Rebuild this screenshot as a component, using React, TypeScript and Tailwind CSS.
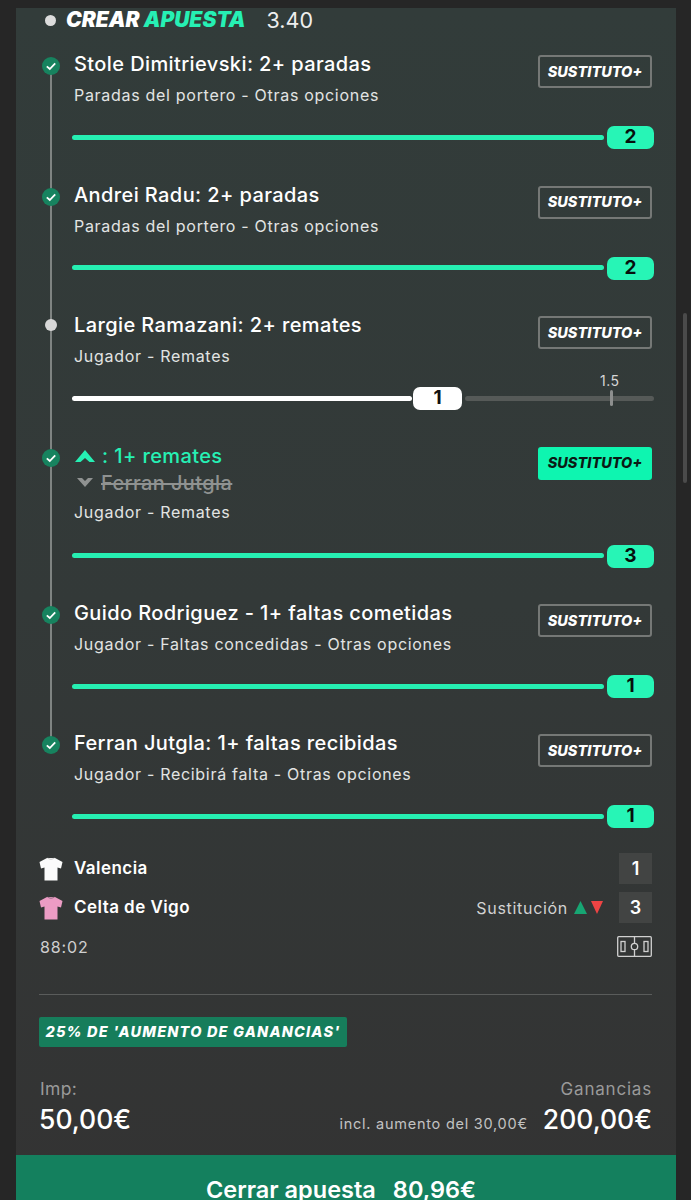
import React from "react";

function Sub({ active }: { active?: boolean }) {
  return (
    <div
      className={`flex h-[33px] w-[114px] shrink-0 items-center justify-center rounded-[3px] text-[14.5px] font-extrabold italic tracking-[0px] ${
        active ? "bg-[#0ef5b0] text-[#0b1a15]" : "border-2 border-[#757876] text-white"
      }`}
    >
      SUSTITUTO+
    </div>
  );
}

function Check() {
  return (
    <svg width="18" height="18" viewBox="0 0 18 18" className="relative z-10 mt-[2px]">
      <circle cx="9" cy="9" r="9" fill="#17835f" />
      <path d="M4.8 9.3 L7.8 12 L13.2 6.4" fill="none" stroke="#fff" strokeWidth="1.8" />
    </svg>
  );
}

function FullSlider({ value }: { value: string }) {
  return (
    <div className="flex h-6 items-center pl-[56px] pr-[22px]">
      <div className="h-[5px] flex-1 rounded-full bg-[#26efb2]" />
      <div className="ml-[3px] mt-px flex h-[23px] w-[47px] items-center justify-center rounded-[7px] bg-[#27f5b6] text-[19px] font-bold text-[#06100d]">
        {value}
      </div>
    </div>
  );
}

function PartialSlider() {
  return (
    <div className="relative flex h-6 items-center pl-[56px] pr-[22px]">
      <div className="h-[5px] w-[340px] rounded-full bg-white" />
      <div className="ml-px mt-px flex h-[23px] w-[49px] items-center justify-center rounded-[7px] bg-white text-[19px] font-bold text-[#111]">
        1
      </div>
      <div className="ml-[3px] h-[5px] flex-1 rounded-full bg-[#565a58]" />
      <div className="absolute left-[594px] top-[4px] h-[16px] w-[3px] rounded-sm bg-[#8d8f8e]" />
      <div className="absolute left-[584px] top-[-16px] text-[14px] tracking-[0.5px] text-[#d6d6d6]">1.5</div>
    </div>
  );
}

function Row({
  title,
  sub,
  checked = true,
  children,
}: {
  title?: string;
  sub: string;
  checked?: boolean;
  children?: React.ReactNode;
}) {
  return (
    <div className="flex pl-[26px] pr-[24px]">
      <div className="flex w-[32px] shrink-0 justify-start pt-[3px]">
        {checked ? (
          <Check />
        ) : (
          <div className="relative z-10 ml-[3px] mt-[3px] h-3 w-3 rounded-full bg-[#d8d8d8]" />
        )}
      </div>
      <div className="min-w-0 flex-1">
        {children ?? (
          <div className="h-[24px] text-[20px] font-medium leading-[24px] tracking-[0.4px] text-white">{title}</div>
        )}
        <div className="mt-[8px] h-[22px] text-[16px] leading-[22px] tracking-[0.7px] text-[#e2e4e3]">{sub}</div>
      </div>
      <div className="pt-[3px]">{children ? <Sub active /> : <Sub />}</div>
    </div>
  );
}

function Shirt({ color, shade }: { color: string; shade: string }) {
  return (
    <svg width="24" height="24" viewBox="0 0 24 24">
      <path
        d="M8 1 L16 1 L23.5 5 L22 11.5 L18.5 10.5 L18.5 23.5 L5.5 23.5 L5.5 10.5 L2 11.5 L0.5 5 Z"
        fill={color}
      />
      <path d="M8 1 Q12 4.5 16 1 L15 0.8 Q12 2.5 9 0.8 Z" fill={shade} />
    </svg>
  );
}

export default function App() {
  return (
    <div
      style={{ fontFamily: "Inter, sans-serif" }}
      className="relative h-[1200px] w-[691px] overflow-hidden bg-[#262626]"
    >
      <div className="absolute right-[4px] top-[313px] h-[170px] w-[4px] rounded-full bg-[#4b4b4b]" />
      <div className="ml-4 mt-2 flex h-[1192px] w-[660px] flex-col overflow-hidden bg-gradient-to-b from-[#323c3a] via-[#333938] to-[#333333]">
        <div className="flex h-[24px] shrink-0 items-center pl-[29px]">
          <div className="h-[11px] w-[11px] rounded-full bg-[#dcdcdc]" />
          <div className="ml-[10px] text-[21px] font-black italic leading-[24px] tracking-[0px] text-white">
            CREAR <span className="text-[#26f0b4]">APUESTA</span>
          </div>
          <div className="ml-[21px] text-[21.5px] leading-[24px] text-[#eeeeee]">3.40</div>
        </div>

        <div className="relative mt-[20px] shrink-0">
          <div className="absolute left-[34px] top-[8px] h-[685px] w-[2px] bg-[#7f8482]" />
          <div className="h-[130.5px]">
            <Row title="Stole Dimitrievski: 2+ paradas" sub="Paradas del portero - Otras opciones" />
            <div className="mt-[19px]"><FullSlider value="2" /></div>
          </div>
          <div className="h-[130.5px]">
            <Row title="Andrei Radu: 2+ paradas" sub="Paradas del portero - Otras opciones" />
            <div className="mt-[19px]"><FullSlider value="2" /></div>
          </div>
          <div className="h-[130.5px]">
            <Row checked={false} title="Largie Ramazani: 2+ remates" sub="Jugador - Remates" />
            <div className="mt-[19px]"><PartialSlider /></div>
          </div>
          <div className="h-[157.5px]">
            <Row sub="Jugador - Remates">
              <div className="flex h-[24px] items-center text-[20px] font-medium leading-[24px] tracking-[0.4px] text-[#26f0b4]">
                <svg width="20" height="12" viewBox="0 0 20 12" className="ml-px mr-[7px]">
                  <path d="M10 0 L20 12 L14.5 12 L10 8 L5.5 12 L0 12 Z" fill="#26f0b4" />
                </svg>
                : 1+ remates
              </div>
              <div className="mb-[-2px] mt-[3px] flex h-[24px] items-center text-[20px] font-medium leading-[24px] tracking-[0.4px] text-[#8f9291]">
                <svg width="16" height="9" viewBox="0 0 16 9" className="ml-[3px] mr-[8px]">
                  <path d="M0 0 L5 0 L8 3 L11 0 L16 0 L8 9 Z" fill="#8f9291" />
                </svg>
                <span className="line-through">Ferran Jutgla</span>
              </div>
            </Row>
            <div className="mt-[21px]"><FullSlider value="3" /></div>
          </div>
          <div className="h-[130px]">
            <Row title="Guido Rodriguez - 1+ faltas cometidas" sub="Jugador - Faltas concedidas - Otras opciones" />
            <div className="mt-[19px]"><FullSlider value="1" /></div>
          </div>
          <div className="h-[118px]">
            <Row title="Ferran Jutgla: 1+ faltas recibidas" sub="Jugador - Recibirá falta - Otras opciones" />
            <div className="mt-[19px]"><FullSlider value="1" /></div>
          </div>
        </div>

        <div className="shrink-0 pl-[23px] pr-[24px]">
          <div className="flex h-[39px] items-center">
            <Shirt color="#fbfbfb" shade="#c9c9c9" />
            <div className="ml-[11px] flex-1 text-[17px] font-semibold tracking-[0.45px] text-white">Valencia</div>
            <div className="flex h-[31px] w-[33px] items-center justify-center bg-[#424443] text-[18px] font-semibold text-white">1</div>
          </div>
          <div className="flex h-[39px] items-center">
            <Shirt color="#ec9cc4" shade="#8f6a80" />
            <div className="ml-[11px] flex-1 text-[17px] font-semibold tracking-[0.45px] text-white">Celta de Vigo</div>
            <div className="text-[16px] tracking-[0.7px] text-[#d2d2d2]">Sustitución</div>
            <svg width="29" height="13" viewBox="0 0 29 13" className="ml-[6px] mr-[16px]">
              <path d="M0 13 L6.5 0 L13 13 Z" fill="#17a673" />
              <path d="M17 0 L29 0 L23 13 Z" fill="#ee4444" />
            </svg>
            <div className="flex h-[31px] w-[33px] items-center justify-center bg-[#424443] text-[18px] font-semibold text-white">3</div>
          </div>
          <div className="flex h-[39px] items-center justify-between">
            <div className="pl-px text-[16px] tracking-[0.9px] text-[#cfcfcf]">88:02</div>
            <svg width="35" height="21" viewBox="0 0 35 21" fill="none" stroke="#d0d0d0" strokeWidth="1.3">
              <rect x="0.7" y="0.7" width="33.6" height="19.6" rx="1" />
              <line x1="17.5" y1="0.7" x2="17.5" y2="20.3" />
              <circle cx="17.5" cy="10.5" r="3.2" fill="#343736" />
              <rect x="4" y="5.5" width="4" height="10" />
              <rect x="27" y="5.5" width="4" height="10" />
            </svg>
          </div>
          <div className="mt-[28px] h-px bg-[#5a5c5b]" />
          <div className="mt-[22px] flex h-[30px] w-[308px] items-center justify-center rounded-[2px] bg-[#167d5b] text-[14.5px] font-extrabold italic tracking-[1.2px] text-white">
            25% DE 'AUMENTO DE GANANCIAS'
          </div>
          <div className="mt-[30px] flex items-start justify-between">
            <div>
              <div className="h-[24px] pl-px text-[17.5px] leading-[24px] tracking-[0.3px] text-[#9a9a9a]">Imp:</div>
              <div className="mt-[2px] text-[26.5px] font-medium leading-[32px] text-white">50,00€</div>
            </div>
            <div className="text-right">
              <div className="h-[24px] text-[17px] leading-[24px] tracking-[0.8px] text-[#9a9a9a]">Ganancias</div>
              <div className="mt-[2px] flex items-baseline justify-end">
                <span className="mr-[15px] text-[14.5px] tracking-[0.75px] text-[#c2c2c2]">incl. aumento del 30,00€</span>
                <span className="text-[26.5px] font-medium leading-[32px] text-white">200,00€</span>
              </div>
            </div>
          </div>
        </div>

        <div className="mt-[20px] flex h-[70px] shrink-0 items-center justify-center bg-[#14805e] pr-[10px] text-[23.5px] font-semibold text-white">
          Cerrar apuesta<span className="ml-[17px]">80,96€</span>
        </div>
      </div>
    </div>
  );
}
